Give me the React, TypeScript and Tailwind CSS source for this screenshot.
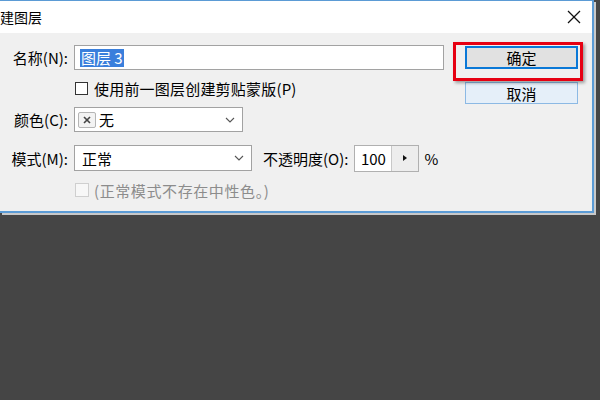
import React from "react";

const Chevron = () => (
  <svg width="10" height="6" viewBox="0 0 10 6" className="shrink-0">
    <polyline points="1,1 5,5 9,1" fill="none" stroke="#555" strokeWidth="1.1" />
  </svg>
);

export default function App() {
  return (
    <div
      className="w-[600px] h-[400px] bg-[#454545] overflow-hidden text-[15px] text-black"
      style={{ fontFamily: '"Noto Sans CJK SC", "Noto Sans", sans-serif' }}
    >
      <div className="w-[594px] border-t border-r-2 border-b-2 border-[#5b9bd5] shadow-[2px_2px_0_#c9c9c9]">
        {/* title bar */}
        <div className="h-[32px] bg-white flex items-center justify-between pr-[11px]">
          <span className="text-[14px] leading-none">建图层</span>
          <svg width="14" height="14" viewBox="0 0 14 14">
            <line x1="1" y1="1" x2="13" y2="13" stroke="#111" strokeWidth="1.2" />
            <line x1="13" y1="1" x2="1" y2="13" stroke="#111" strokeWidth="1.2" />
          </svg>
        </div>
        {/* content */}
        <div className="h-[178px] bg-[#f0f0f0] flex">
          <div className="flex-1 flex flex-col">
            {/* row 1 */}
            <div className="mt-[12px] h-[25px] flex items-center">
              <div className="w-[68px] text-right leading-none">名称(N):</div>
              <div className="ml-[6px] w-[370px] h-[25px] bg-white border border-[#a2a2a2] flex items-center pl-[5px]">
                <span className="bg-[#3a7fdc] text-white leading-[18px] h-[18px] px-[1px]">图层 3</span>
              </div>
            </div>
            {/* row 2 */}
            <div className="mt-[10px] h-[16px] flex items-center">
              <div className="ml-[75px] w-[13px] h-[13px] border border-[#333] bg-white" />
              <span className="ml-[6px] leading-none tracking-[0.2px]">使用前一图层创建剪贴蒙版(P)</span>
            </div>
            {/* row 3 */}
            <div className="mt-[11px] h-[25px] flex items-center">
              <div className="w-[68px] text-right leading-none">颜色(C):</div>
              <div className="ml-[6px] w-[169px] h-[25px] bg-white border border-[#a2a2a2] flex items-center pl-[3px] pr-[7px]">
                <div className="w-[18px] h-[16px] border border-[#b5b5b5] rounded-[2px] bg-[#f3f3f3] flex items-center justify-center">
                  <svg width="8" height="8" viewBox="0 0 8 8">
                    <line x1="1" y1="1" x2="7" y2="7" stroke="#444" strokeWidth="1.6" />
                    <line x1="7" y1="1" x2="1" y2="7" stroke="#444" strokeWidth="1.6" />
                  </svg>
                </div>
                <span className="ml-[3px] leading-none flex-1">无</span>
                <Chevron />
              </div>
            </div>
            {/* row 4 */}
            <div className="mt-[13px] h-[26px] flex items-center">
              <div className="w-[68px] text-right leading-none">模式(M):</div>
              <div className="ml-[6px] w-[178px] h-[26px] bg-white border border-[#a2a2a2] flex items-center pl-[7px] pr-[7px]">
                <span className="leading-none flex-1">正常</span>
                <Chevron />
              </div>
              <span className="ml-[11px] leading-none">不透明度(O):</span>
              <div className="ml-[6px] w-[65px] h-[27px] border border-[#b0b0b0] flex">
                <div className="w-[36px] bg-white flex items-center justify-center leading-none">100</div>
                <div className="flex-1 bg-[#ededed] border-l border-[#c8c8c8] flex items-center justify-center">
                  <svg width="4" height="6" viewBox="0 0 4 6">
                    <polygon points="0,0 4,3 0,6" fill="#111" />
                  </svg>
                </div>
              </div>
              <span className="ml-[5px] leading-none">%</span>
            </div>
            {/* row 5 */}
            <div className="mt-[11px] h-[16px] flex items-center">
              <div className="ml-[75px] w-[14px] h-[14px] border border-[#cfcfcf] bg-[#f7f7f7]" />
              <span className="ml-[5px] leading-none text-[#8c8c8c] tracking-[0.6px]">(正常模式不存在中性色。)</span>
            </div>
          </div>
          {/* buttons */}
          <div className="w-[127px] pr-[14px] flex flex-col items-end">
            <div className="relative mt-[13px]">
              <div className="w-[113px] h-[23px] border-2 border-[#0a78d7] bg-[#e1e1e1] flex items-center justify-center leading-none">
                确定
              </div>
              <div className="absolute left-[-12px] top-[-4px] w-[130px] h-[39px] border-[3px] border-[#e60012] shadow-[2px_2px_3px_rgba(0,0,0,0.35)]" />
            </div>
            <div className="mt-[13px] w-[113px] h-[22px] border border-[#8cb9e4] bg-[#e5eff9] flex items-center justify-center leading-none">
              取消
            </div>
          </div>
        </div>
      </div>
    </div>
  );
}
